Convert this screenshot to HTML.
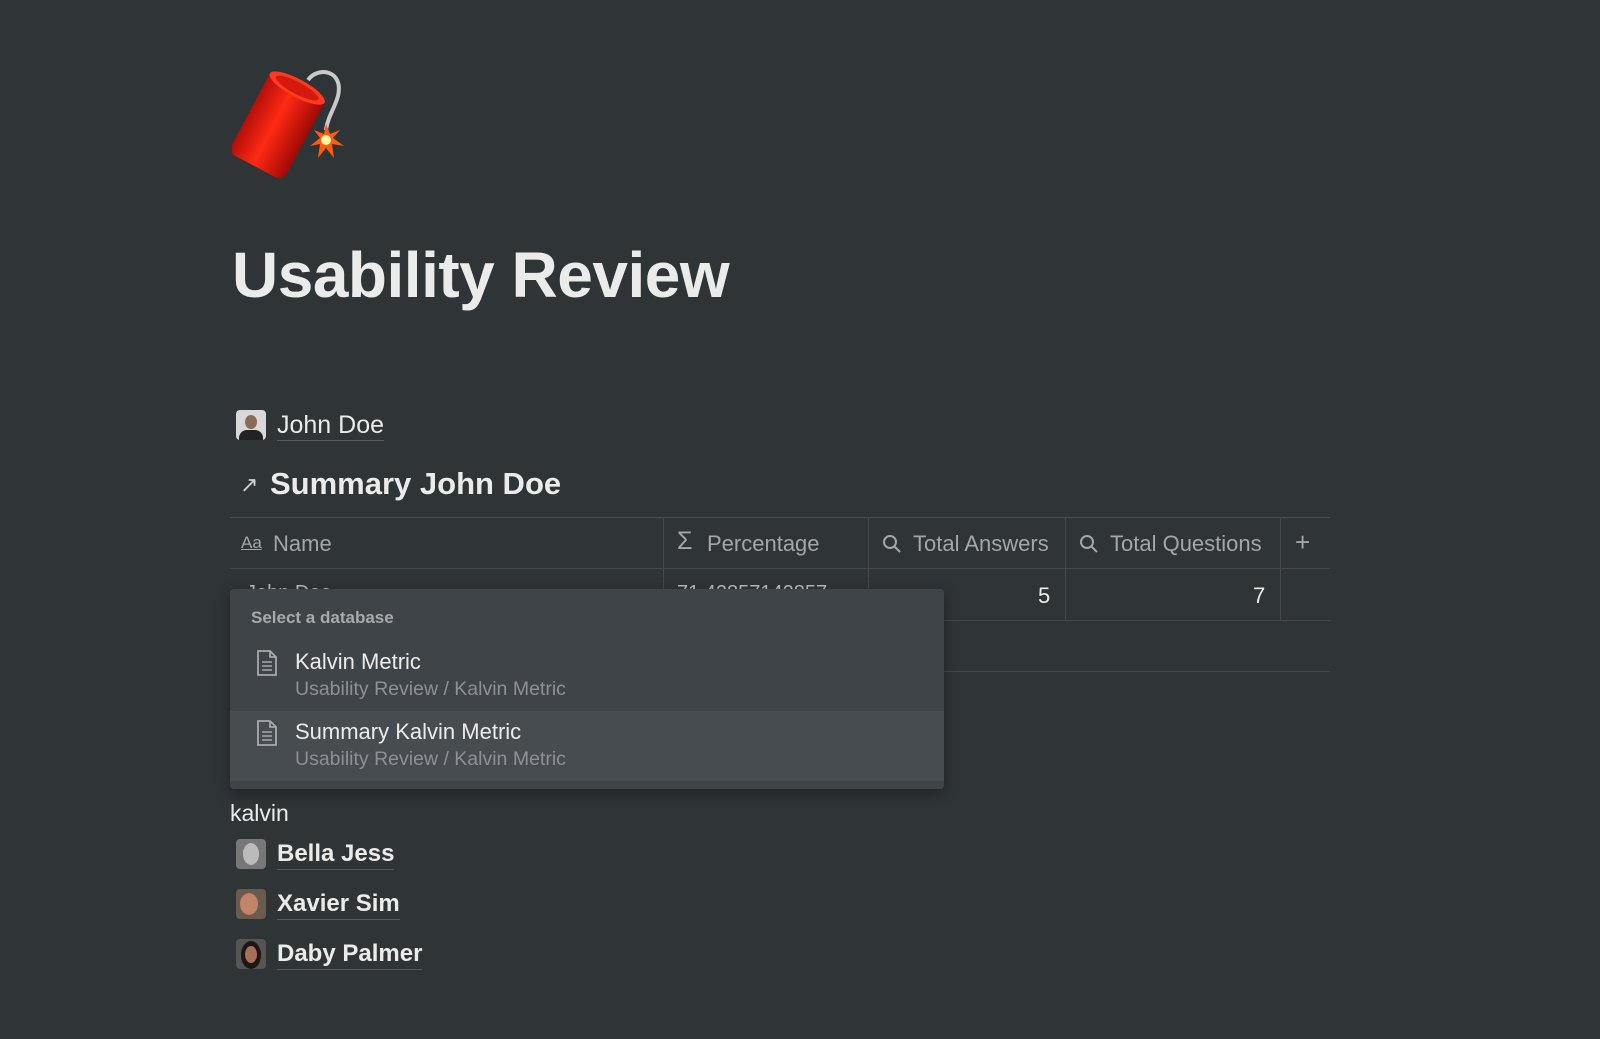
<!DOCTYPE html>
<html><head><meta charset="utf-8"><style>
*{margin:0;padding:0;box-sizing:border-box}
body{width:1600px;height:1039px;background:#2f3437;font-family:"Liberation Sans",sans-serif;color:#ebebea;position:relative;overflow:hidden}
.a{position:absolute;white-space:nowrap}
.ul{border-bottom:1px solid #55595c}
.av{position:absolute;width:30px;height:30px;border-radius:4px;overflow:hidden}
.line{position:absolute;height:1px;background:#45494c}
.vl{position:absolute;width:1px;background:#45494c}
.hd{font-size:22px;color:#a4a6a7}
</style></head><body>
<svg class="a" style="left:232px;top:66px" width="124" height="116" viewBox="0 0 124 116">
<defs><linearGradient id="g" x1="0" y1="0" x2="1" y2="0"><stop offset="0" stop-color="#b50e08"/><stop offset=".45" stop-color="#ff2a14"/><stop offset="1" stop-color="#a00a05"/></linearGradient></defs>
<g transform="rotate(28 45 60)"><rect x="14" y="14" width="62" height="92" rx="8" fill="url(#g)"/><ellipse cx="45" cy="17" rx="31" ry="9" fill="#ff3a20"/><ellipse cx="45" cy="17" rx="24" ry="6" fill="#d41a0c"/></g>
<path d="M76 14 C86 0 112 4 106 30 C102 44 96 50 94 64" stroke="#c9c9c9" stroke-width="4" fill="none"/>
<polygon points="94,58 98,68 108,64 101,72 112,80 100,78 102,92 94,82 86,92 88,78 78,80 88,72 82,64 92,68" fill="#ff5a10"/>
<circle cx="94" cy="74" r="5" fill="#fff6a0"/>
</svg>
<div class="a" style="left:232px;top:238px;font-size:64px;font-weight:bold;letter-spacing:-0.5px">Usability Review</div>

<div class="av" style="left:236px;top:410px;background:#d8d8d8"><div style="position:absolute;left:9px;top:5px;width:12px;height:14px;border-radius:50%;background:#8a6a58"></div><div style="position:absolute;left:3px;top:20px;width:24px;height:12px;border-radius:8px 8px 0 0;background:#222"></div></div>
<div class="a ul" style="left:277px;top:410px;font-size:25px;line-height:30px">John Doe</div>
<div class="a" style="left:240px;top:472px;font-size:22px;color:#d0d0d0">↗</div>
<div class="a" style="left:270px;top:466px;font-size:31px;font-weight:bold">Summary John Doe</div>

<div class="line" style="left:230px;top:517px;width:1100px;background:#4a4e51"></div>
<div class="line" style="left:230px;top:568px;width:1100px"></div>
<div class="line" style="left:230px;top:620px;width:1100px"></div>
<div class="line" style="left:230px;top:671px;width:1100px"></div>
<div class="vl" style="left:663px;top:517px;height:103px"></div>
<div class="vl" style="left:868px;top:517px;height:103px"></div>
<div class="vl" style="left:1065px;top:517px;height:103px"></div>
<div class="vl" style="left:1280px;top:517px;height:103px"></div>
<div class="a hd" style="left:241px;top:533px;font-size:17px;text-decoration:underline">Aa</div>
<div class="a hd" style="left:273px;top:531px">Name</div>
<div class="a hd" style="left:677px;top:527px;font-size:25px">Σ</div>
<div class="a hd" style="left:707px;top:531px">Percentage</div>
<svg class="a" style="left:882px;top:534px" width="20" height="20" viewBox="0 0 20 20"><circle cx="8" cy="8" r="6" stroke="#a4a6a7" stroke-width="2" fill="none"/><path d="M12.5 12.5 L18 18" stroke="#a4a6a7" stroke-width="2"/></svg>
<div class="a hd" style="left:913px;top:531px">Total Answers</div>
<svg class="a" style="left:1079px;top:534px" width="20" height="20" viewBox="0 0 20 20"><circle cx="8" cy="8" r="6" stroke="#a4a6a7" stroke-width="2" fill="none"/><path d="M12.5 12.5 L18 18" stroke="#a4a6a7" stroke-width="2"/></svg>
<div class="a hd" style="left:1110px;top:531px">Total Questions</div>
<div class="a hd" style="left:1295px;top:527px;font-size:26px;font-weight:300">+</div>
<div class="a" style="left:1038px;top:583px;font-size:22px">5</div>
<div class="a" style="left:1253px;top:583px;font-size:22px">7</div>
<div class="a" style="left:246px;top:582px;font-size:20px;color:#bbb">John Doe</div>
<div class="a" style="left:677px;top:582px;font-size:20px;color:#bbb">71.42857142857</div>

<div class="a" style="left:230px;top:589px;width:714px;height:200px;background:#3f4448;border-radius:4px;box-shadow:0 4px 14px rgba(0,0,0,.35)">
<div class="a" style="left:21px;top:19px;font-size:17px;font-weight:bold;color:#a7a9aa">Select a database</div>
<div class="a" style="left:0;top:122px;width:714px;height:70px;background:#474c50"></div>
<svg class="a" style="left:25px;top:60px" width="24" height="28" viewBox="0 0 24 28"><path d="M3 2 H15 L21 8 V26 H3 Z M15 2 V8 H21" stroke="#a7a9aa" stroke-width="1.8" fill="none"/><path d="M7 13 H17 M7 17 H17 M7 21 H17" stroke="#a7a9aa" stroke-width="1.6"/></svg>
<div class="a" style="left:65px;top:60px;font-size:22px">Kalvin Metric</div>
<div class="a" style="left:65px;top:89px;font-size:19.5px;color:#8e9193">Usability Review / Kalvin Metric</div>
<svg class="a" style="left:25px;top:130px" width="24" height="28" viewBox="0 0 24 28"><path d="M3 2 H15 L21 8 V26 H3 Z M15 2 V8 H21" stroke="#a7a9aa" stroke-width="1.8" fill="none"/><path d="M7 13 H17 M7 17 H17 M7 21 H17" stroke="#a7a9aa" stroke-width="1.6"/></svg>
<div class="a" style="left:65px;top:130px;font-size:22px">Summary Kalvin Metric</div>
<div class="a" style="left:65px;top:159px;font-size:19.5px;color:#8e9193">Usability Review / Kalvin Metric</div>
</div>

<div class="a" style="left:230px;top:800px;font-size:23px">kalvin</div>
<div class="av" style="left:236px;top:839px;background:#777"><div style="position:absolute;left:7px;top:4px;width:16px;height:22px;border-radius:50%;background:#bbb"></div></div>
<div class="a ul" style="left:277px;top:839px;font-size:24px;line-height:30px;font-weight:bold">Bella Jess</div>
<div class="av" style="left:236px;top:889px;background:#6b5a50"><div style="position:absolute;left:4px;top:4px;width:18px;height:22px;border-radius:50%;background:#c08468"></div></div>
<div class="a ul" style="left:277px;top:889px;font-size:24px;line-height:30px;font-weight:bold">Xavier Sim</div>
<div class="av" style="left:236px;top:939px;background:#555"><div style="position:absolute;left:5px;top:2px;width:20px;height:28px;border-radius:50%;background:#1e1612"></div><div style="position:absolute;left:9px;top:7px;width:12px;height:17px;border-radius:50%;background:#a8705a"></div></div>
<div class="a ul" style="left:277px;top:939px;font-size:24px;line-height:30px;font-weight:bold">Daby Palmer</div>
</body></html>
